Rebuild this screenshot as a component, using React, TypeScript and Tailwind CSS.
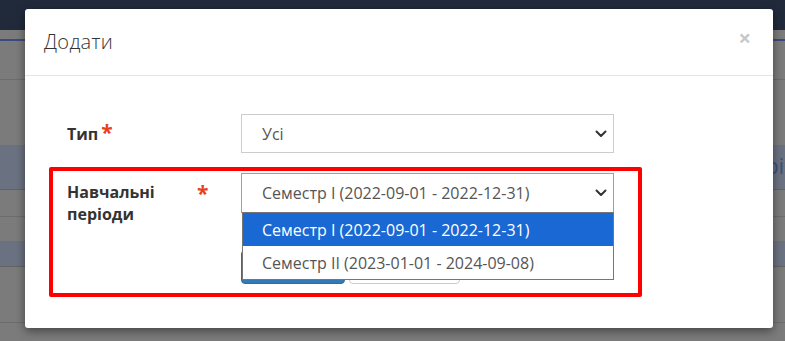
import React from "react";

const Chevron = () => (
  <svg width="12" height="8" viewBox="0 0 12 8" className="shrink-0">
    <polyline points="1.5,1.5 6,6 10.5,1.5" fill="none" stroke="#333" strokeWidth="2" strokeLinecap="round" strokeLinejoin="round" />
  </svg>
);

const options = ["Семестр I (2022-09-01 - 2022-12-31)", "Семестр II (2023-01-01 - 2024-09-08)"];

export default function App() {
  return (
    <div className="relative w-[785px] h-[341px] overflow-hidden bg-[#7b7b7b] font-['Open_Sans',sans-serif]">
      {/* page behind the backdrop */}
      <div className="flex flex-col">
        <div className="h-[30px] bg-[#212a3b]" />
        <div className="h-[9px]" />
        <div className="h-[2px] bg-[#3b4a80]" />
        <div className="h-[39px] border-b border-[#6c6c6c]" />
        <div className="h-[65px]" />
        <div className="h-[45px] bg-[#6a7180] border-b border-[#626262] flex items-center justify-end">
          <span className="text-[21px] text-[#3d4f78] whitespace-nowrap mr-[1px]">Пері</span>
        </div>
        <div className="h-[27px] border-b border-[#6c6c6c]" />
        <div className="h-[24px]" />
        <div className="h-[26px] bg-[#6a7180] border-b border-[#626262]" />
        <div className="h-[56px] border-b border-[#6c6c6c]" />
      </div>

      {/* modal */}
      <div className="absolute left-[25px] top-[9px] w-[748px] h-[319px] bg-white rounded-[3px] shadow-[0_3px_10px_rgba(0,0,0,0.45)]">
        <div className="h-[67px] border-b border-[#e5e5e5] flex items-center justify-between pl-[19px] pr-[22px]">
          <h4 className="text-[20px] font-light text-[#333] tracking-[0.3px]">Додати</h4>
          <span className="text-[22px] font-bold text-[#c8c8c8] leading-none -mt-[10px]">×</span>
        </div>

        <div className="px-[24px] pt-[38px]">
          <div className="flex items-center">
            <div className="w-[192px] pl-[18px] text-[16px] font-bold text-[#333]">
              Тип<span className="text-[#e8401c] ml-[3px] text-[21px] leading-none">*</span>
            </div>
            <div className="w-[373px] h-[39px] border border-[#ccc] flex items-center justify-between pl-[20px] pr-[6px] text-[16px] text-[#555]">
              <span>Усі</span>
              <Chevron />
            </div>
          </div>

          <div className="mt-[14px] w-[593px] h-[130px] border-[4px] border-[#ff0000] rounded-[2px] pt-[2px]">
            <div className="flex">
              <div className="w-[188px] pl-[14px] flex items-start text-[16px] font-bold text-[#333] leading-[22px] pt-[8px]">
                <span className="w-[130px]">Навчальні періоди</span>
                <span className="text-[#e8401c] text-[21px] leading-none mt-[2px]">*</span>
              </div>
              <div className="relative">
                <div className="w-[373px] h-[40px] border border-[#66afe9] flex items-center justify-between pl-[20px] pr-[6px] text-[16px] text-[#555]">
                  <span>{options[0]}</span>
                  <Chevron />
                </div>
                <div className="flex gap-[4px] mt-[37px]">
                  <div className="w-[104px] h-[34px] bg-[#337ab7] rounded-[4px] border border-[#2e6da4]" />
                  <div className="w-[111px] h-[34px] bg-white rounded-[4px] border border-[#ccc]" />
                </div>
                <div className="absolute left-[1px] top-[39px] w-[372px] bg-white border border-[#767676] text-[16px] z-10">
                  {options.map((o, i) => (
                    <div
                      key={o}
                      className={`h-[33px] flex items-center pl-[19px] ${i === 0 ? "bg-[#1a68d3] text-white" : "text-[#555]"}`}
                    >
                      {o}
                    </div>
                  ))}
                </div>
              </div>
            </div>
          </div>
        </div>
      </div>
    </div>
  );
}
